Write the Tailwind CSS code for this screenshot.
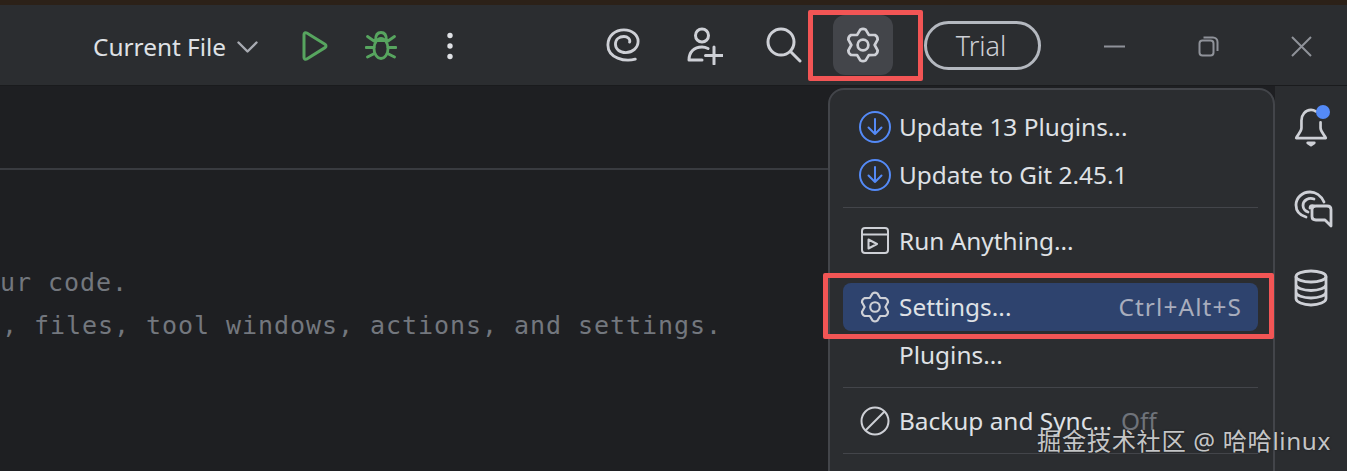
<!DOCTYPE html>
<html><head><meta charset="utf-8">
<script src="https://cdn.jsdelivr.net/npm/@tailwindcss/browser@4"></script>
</head>
<body class="m-0">
<div class="relative w-[1347px] h-[471px] overflow-hidden flex flex-col bg-[#1e1f22] font-['Noto_Sans','Open_Sans',sans-serif] text-[#dfe1e5]">
  <div class="h-[5px] shrink-0 bg-[#2c2118]"></div>
  <header class="h-[81px] shrink-0 flex items-center pl-[93px] pt-[2px] bg-[#2b2d30] border-b border-[#1a1b1d] text-[#ced0d6]">
    <span class="text-[24.400px] leading-none text-[#dfe1e5] w-[133px] whitespace-nowrap mt-[2px]">Current File</span>
    <svg class="ml-[11px] mt-[2px] w-[21px] h-[12px]" viewBox="0 0 21 12" fill="none" stroke="#a8abb2" stroke-width="2.400" stroke-linecap="round" stroke-linejoin="round"><path d="M1.500 1.500 10.500 10.500 19.500 1.500"/></svg>
    <svg class="ml-[44px] w-[26px] h-[30px]" viewBox="0 0 26 30" fill="none" stroke="#57a55f" stroke-width="3" stroke-linejoin="round"><path d="M2 3.500C2 2 3.500 1.300 4.800 2L23 13.200C24.300 14 24.300 15.800 23 16.600L4.800 28C3.500 28.700 2 28 2 26.500Z"/></svg>
    <svg class="ml-[37px] w-[32px] h-[30px]" viewBox="0 0 32 30" fill="none" stroke="#57a55f" stroke-width="2.800" stroke-linecap="round"><ellipse cx="16" cy="17.500" rx="7" ry="10"/><path d="M10.500 9.500C10.500 4 12.500 1.500 16 1.500S21.500 4 21.500 9.500M9 9.500H23M2.500 5.500 9 10M29.500 5.500 23 10M1 16.500H9M31 16.500H23M2.500 26 9.500 22.500M29.500 26 22.500 22.500"/></svg>
    <svg class="ml-[47px] w-[12px] h-[28px]" viewBox="0 0 12 28" fill="#dfe1e5"><circle cx="6" cy="3.500" r="2.700"/><circle cx="6" cy="14" r="2.700"/><circle cx="6" cy="24.500" r="2.700"/></svg>
    <svg class="ml-[150px] -mt-[2px] w-[34px] h-[34px]" viewBox="0 0 36 36" fill="none" stroke="#ced0d6" stroke-width="3" stroke-linecap="round"><path d="M31 33C20 36 2 32 2 18C2 8 10 2 19 2C28 2 34 8 34 14C34 21 28 26 21 26C14 26 10 22 10 17C10 12 14 9 19 9C23 9 26 12 25 15"/></svg>
    <svg class="ml-[47px] w-[36px] h-[38px]" viewBox="0 0 36 38" fill="none" stroke="#ced0d6" stroke-width="3" stroke-linecap="round"><circle cx="15" cy="8.500" r="6.500"/><path d="M2 33C2 25 7 20 15 20C17 20 19 20.500 21 21.500M2 33H15M27 20V37M18.500 28.500H35.500"/></svg>
    <svg class="ml-[43px] -mt-[2px] w-[36px] h-[36px]" viewBox="0 0 36 36" fill="none" stroke="#ced0d6" stroke-width="3" stroke-linecap="round"><circle cx="15" cy="15" r="13"/><path d="M24.500 24.500 34 34"/></svg>
    <div class="ml-[31px] -mt-[2px] w-[60px] h-[60px] rounded-[12px] bg-[#43454a] flex items-center justify-center">
      <svg class="w-[36px] h-[36px]" viewBox="-18.500 -18.500 37 37" fill="none" stroke="#ced0d6" stroke-width="2.800" stroke-linejoin="round"><path d="M-6-10.390-2.780-15.760Q0-17.500 2.780-15.760L6-10.390 12.260-10.280Q15.160-8.750 15.040-5.470L12 0 15.040 5.470Q15.160 8.750 12.260 10.280L6 10.390 2.780 15.760Q0 17.500-2.780 15.760L-6 10.390-12.260 10.280Q-15.160 8.750-15.040 5.470L-12 0-15.040-5.470Q-15.160-8.750-12.260-10.280Z"/><circle r="5.500"/></svg>
    </div>
    <div class="ml-[31px] -mt-[2px] w-[117px] h-[49px] rounded-full border-[3px] border-[#b4b8bf] flex items-center justify-center pr-[3px] text-[27px] leading-none text-[#ced0d6] font-light">Trial</div>
    <svg class="ml-[63px] w-[21px] h-[3px]" viewBox="0 0 21 3"><rect width="21" height="2" y="0.500" fill="#8f9299"/></svg>
    <svg class="ml-[73px] w-[21px] h-[21px]" viewBox="0 0 21 21" fill="none" stroke="#8f9299" stroke-width="2"><rect x="1.500" y="4.500" width="14" height="15" rx="3"/><path d="M5.500 1.500H15C17.500 1.500 19.500 3.500 19.500 6V15"/></svg>
    <svg class="ml-[72px] w-[21px] h-[21px]" viewBox="0 0 21 21" fill="none" stroke="#8f9299" stroke-width="2"><path d="M1 1 20 20M20 1 1 20"/></svg>
  </header>
  <main class="flex-1 flex min-h-0">
    <section class="flex-1 flex flex-col min-w-0">
      <div class="h-[84px] shrink-0 border-b-2 border-[#393b40]"></div>
      <div class="pt-[91px] font-['DejaVu_Sans_Mono',monospace] text-[25px] leading-[43px] tracking-[0.950px] text-[#73777e]">
        <div class="whitespace-pre">ur code.</div>
        <div class="whitespace-pre pl-[2px]">, files, tool windows, actions, and settings.</div>
      </div>
    </section>
    <aside class="w-[72px] shrink-0 bg-[#2b2d30] flex flex-col items-start pl-[19px] pt-[22px]">
      <div class="relative w-[34px] h-[42px]">
        <svg class="w-[34px] h-[42px]" viewBox="0 0 34 44" fill="none" stroke="#ced0d6" stroke-width="2.800" stroke-linecap="round" stroke-linejoin="round"><path d="M22 3.500C20.500 2.500 18.500 2 17 2C11 2 7 7 7 13V21C7 25 3 28 1.500 31.500H32.500C31 28 27 25 27 21V15"/><path d="M13.500 36.500H20.500L17 39Z" fill="#ced0d6"/></svg>
        <span class="absolute left-[22px] -top-[3px] w-[14px] h-[14px] rounded-full bg-[#548af7]"></span>
      </div>
      <svg class="mt-[40px] w-[39px] h-[38px]" viewBox="0 0 39 38" fill="none" stroke="#ced0d6" stroke-width="2.800" stroke-linecap="round" stroke-linejoin="round"><path d="M30 12C27 5 21 2 16 2C8 2 2 8 2 15C2 20 5 25 12 27"/><path d="M20 9C15 7 9 10 9 15.500C9 18 11 21 14 22"/><path d="M20 16C18 15 16 16 16 18"/><path d="M22 16H33C35.500 16 37 17.500 37 19.500V36L31 30H22C19.500 30 18 28.500 18 26.500V19.500C18 17.500 19.500 16 22 16Z"/></svg>
      <svg class="mt-[41px] w-[34px] h-[38px]" viewBox="0 0 34 38" fill="none" stroke="#ced0d6" stroke-width="2.800"><ellipse cx="17" cy="7.500" rx="15" ry="5.500"/><path d="M2 7.500V29.500C2 33 9 36 17 36S32 33 32 29.500V7.500M2 15.500C2 19 9 21.500 17 21.500S32 19 32 15.500M2 23C2 26.500 9 29 17 29S32 26.500 32 23"/></svg>
    </aside>
  </main>

  <div class="absolute left-[828px] top-[88px] w-[447px] h-[420px] bg-[#2b2d30] border-2 border-[#43454a] rounded-[16px] pt-[13px] pl-[13px] pr-[15px] text-[24.400px] leading-none text-[#dfe1e5]">
    <div class="h-[48px] flex items-center pl-[16px]">
      <svg class="w-[32px] h-[32px] mr-[8px]" viewBox="0 0 32 32" fill="none" stroke="#548af7" stroke-width="2" stroke-linecap="round" stroke-linejoin="round"><circle cx="16" cy="16" r="15"/><path d="M16 8V23M9.500 16.500 16 23 22.500 16.500"/></svg>
      <span>Update 13 Plugins...</span>
    </div>
    <div class="h-[48px] flex items-center pl-[16px]">
      <svg class="w-[32px] h-[32px] mr-[8px]" viewBox="0 0 32 32" fill="none" stroke="#548af7" stroke-width="2" stroke-linecap="round" stroke-linejoin="round"><circle cx="16" cy="16" r="15"/><path d="M16 8V23M9.500 16.500 16 23 22.500 16.500"/></svg>
      <span>Update to Git 2.45.1</span>
    </div>
    <div class="mt-[8px] mb-[9px] h-[1px] bg-[#43454a]"></div>
    <div class="h-[48px] flex items-center pl-[16px]">
      <svg class="w-[32px] h-[32px] mr-[8px]" viewBox="0 0 32 32" fill="none" stroke="#ced0d6" stroke-width="2" stroke-linejoin="round"><rect x="3" y="3" width="26" height="25" rx="3"/><path d="M3 9.500H29"/><path d="M9.500 14.500 18 19 9.500 23.500Z"/></svg>
      <span>Run Anything...</span>
    </div>
    <div class="mt-[8px] mb-[9px] h-[1px] bg-[#43454a]"></div>
    <div class="h-[48px] flex items-center pl-[16px] pr-[16px] rounded-[8px] bg-[#2e436e]">
      <svg class="w-[32px] h-[32px] mr-[8px]" viewBox="-18.500 -18.500 37 37" fill="none" stroke="#ced0d6" stroke-width="2.500" stroke-linejoin="round"><path d="M-6-10.390-2.780-15.760Q0-17.500 2.780-15.760L6-10.390 12.260-10.280Q15.160-8.750 15.040-5.470L12 0 15.040 5.470Q15.160 8.750 12.260 10.280L6 10.390 2.780 15.760Q0 17.500-2.780 15.760L-6 10.390-12.260 10.280Q-15.160 8.750-15.040 5.470L-12 0-15.040-5.470Q-15.160-8.750-12.260-10.280Z"/><circle r="5.500"/></svg>
      <span>Settings...</span>
      <span class="ml-auto tracking-[1.100px] text-[#a8adbd]">Ctrl+Alt+S</span>
    </div>
    <div class="h-[48px] flex items-center pl-[56px]">Plugins...</div>
    <div class="mt-[8px] mb-[9px] h-[1px] bg-[#43454a]"></div>
    <div class="h-[48px] flex items-center pl-[16px]">
      <svg class="w-[32px] h-[32px] mr-[8px]" viewBox="0 0 32 32" fill="none" stroke="#ced0d6" stroke-width="2"><circle cx="16" cy="16" r="13.500"/><path d="M6.500 25.500 25.500 6.500"/></svg>
      <span>Backup and Sync...</span>
      <span class="ml-[9px] text-[#6f737a]">Off</span>
    </div>
    <div class="mt-[8px] h-[1px] bg-[#43454a]"></div>
  </div>

  <div class="absolute left-[808px] top-[10px] w-[115px] h-[71px] border-[5px] border-[#f25555] rounded-[2px]"></div>
  <div class="absolute left-[823px] top-[273px] w-[451px] h-[66px] border-[5px] border-[#f25555] rounded-[2px]"></div>
  <div class="absolute left-[1037px] top-[424px] whitespace-nowrap text-[24.300px] leading-[34px] tracking-[0.600px] text-[#e4e5e6]/85 font-['Noto_Sans','Noto_Sans_CJK_SC',sans-serif] [text-shadow:0_0_2px_rgba(0,0,0,0.5)]">掘金技术社区 @ 哈哈linux</div>
</div>
</body></html>
